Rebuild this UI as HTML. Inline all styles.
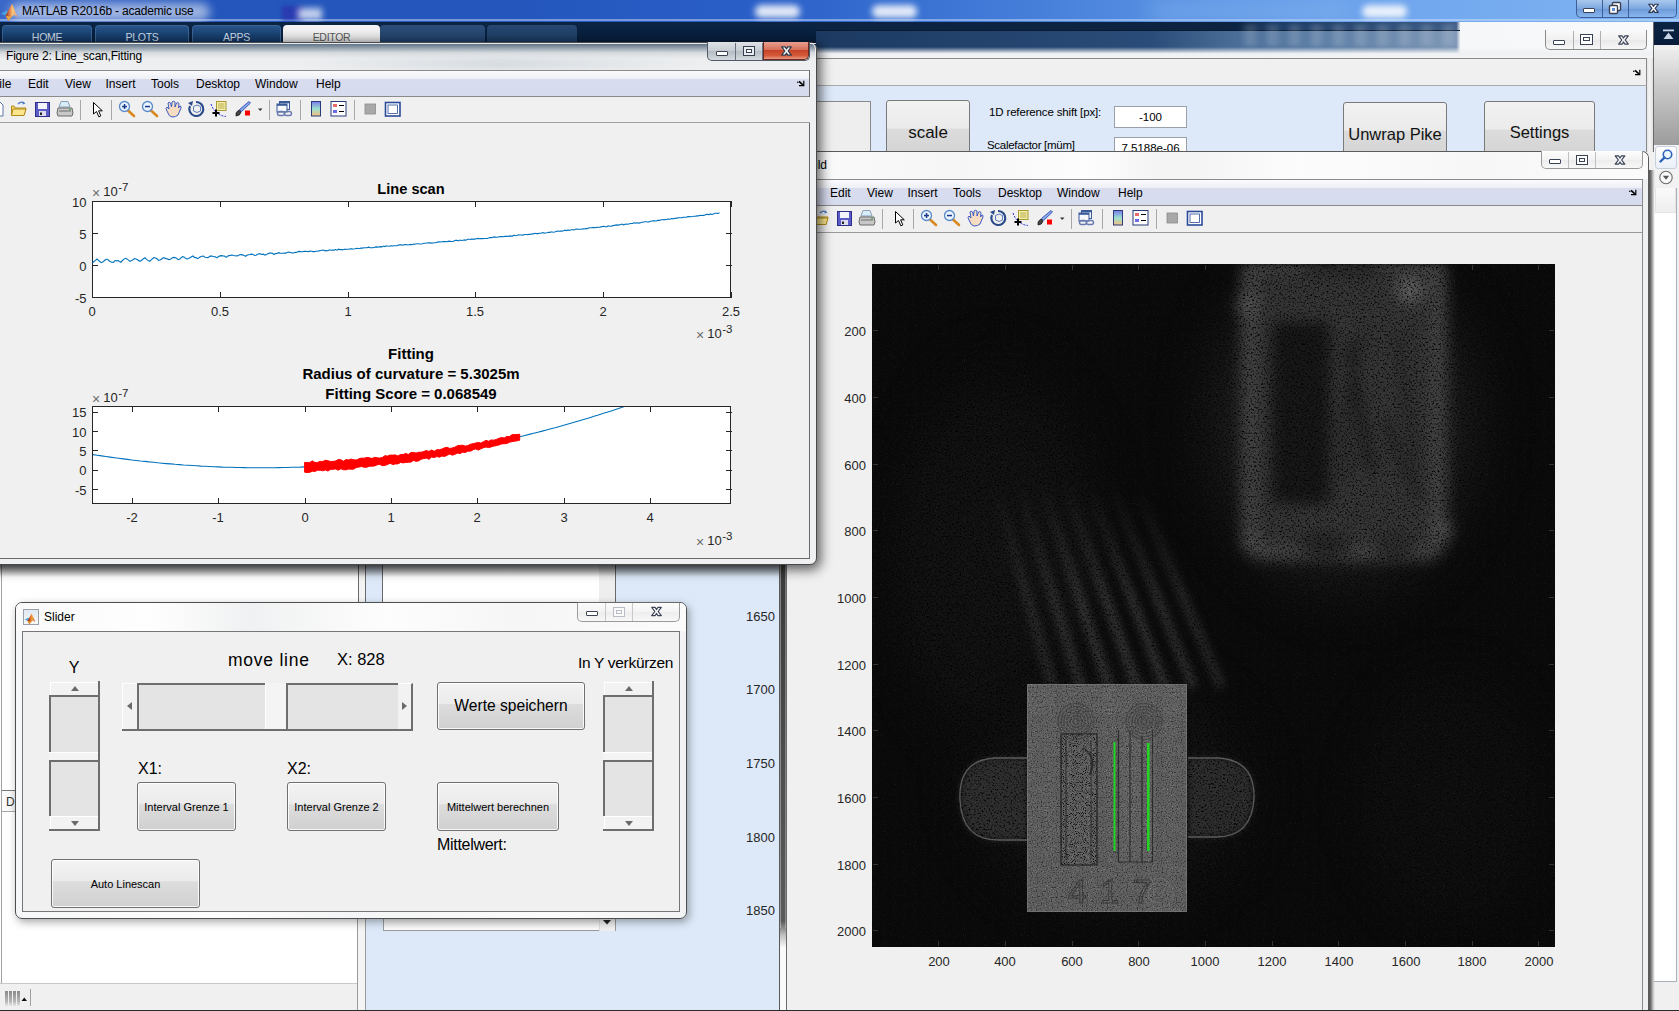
<!DOCTYPE html>
<html><head><meta charset="utf-8">
<style>
*{box-sizing:border-box}
html,body{margin:0;padding:0}
body{width:1679px;height:1011px;overflow:hidden;position:relative;background:#f0f0f0;font-family:"Liberation Sans",sans-serif;color:#000}
.a{position:absolute}
.t{position:absolute;white-space:nowrap;line-height:1}
svg{position:absolute;overflow:visible}
.btn{position:absolute;border:1px solid #707070;border-radius:3px;background:linear-gradient(#f3f3f3 0%,#ebebeb 45%,#dddddd 46%,#d0d0d0 100%);box-shadow:inset 0 0 0 1px rgba(255,255,255,.85)}
.btn span{position:absolute;left:0;right:0;top:50%;transform:translateY(-50%);text-align:center;line-height:1;white-space:nowrap;color:#000}

</style></head>
<body>
<div class="a" style="left:0px;top:0px;width:1679px;height:23px;background:linear-gradient(90deg,#3a68c8 0%,#2456bc 12%,#2456bc 30%,#2a5fc8 45%,#3f78d6 58%,#5b94e4 72%,#72a8ee 85%,#7fb4f2 100%)"></div>
<div class="a" style="left:0px;top:19px;width:1679px;height:2px;background:rgba(220,230,250,.45)"></div>
<div class="a" style="left:755px;top:5px;width:45px;height:13px;border-radius:6px;background:#fff;filter:blur(3px);opacity:.85"></div>
<div class="a" style="left:872px;top:5px;width:45px;height:13px;border-radius:6px;background:#fff;filter:blur(3px);opacity:.85"></div>
<div class="a" style="left:1362px;top:5px;width:45px;height:13px;border-radius:6px;background:#fff;filter:blur(3px);opacity:.85"></div>
<div class="a" style="left:282px;top:6px;width:22px;height:14px;background:#2a3ab0;filter:blur(2px)"></div>
<div class="a" style="left:298px;top:8px;width:24px;height:12px;background:#e8eefa;filter:blur(3px);opacity:.8"></div>
<div class="a" style="left:1150px;top:2px;width:200px;height:18px;background:#8ab8f0;filter:blur(10px);opacity:.5"></div>
<svg style="left:0px;top:0px" width="22" height="22" viewBox="0 0 20 20">
<defs><linearGradient id="mlg0" x1="0" y1="0" x2="1" y2="0"><stop offset="0" stop-color="#8a1a10"/><stop offset=".45" stop-color="#e87a30"/><stop offset=".6" stop-color="#f0b040"/><stop offset="1" stop-color="#d04020"/></linearGradient></defs>
<path d="M1 12.5 L5.8 9.5 L7.2 11 L5 14 Z" fill="#3fa0e0"/>
<path d="M5 14 L11 3.5 L16 15.5 L12.5 13.5 L7.5 19 Z" fill="url(#mlg0)"/>
<path d="M5 14 L7.5 19 L10 15.5 Z" fill="#f0b030" opacity=".8"/>
</svg><div class="a" style="left:10px;top:3px;width:200px;height:18px;border-radius:9px;background:rgba(255,255,255,.55);filter:blur(5px)"></div>
<div class="t" style="left:22px;top:5px;font-size:12px;color:#000;letter-spacing:-.2px">MATLAB R2016b - academic use</div>
<div class="a" style="left:1576px;top:0px;width:101px;height:18px;border:1px solid #3a5f9a;border-top:none;border-radius:0 0 5px 5px;background:linear-gradient(#a9c8ee,#7fa8e0 50%,#6d98d8 51%,#88b6ee)"></div>
<div class="a" style="left:1602px;top:0px;width:1px;height:17px;background:#3a5f9a"></div>
<div class="a" style="left:1628px;top:0px;width:1px;height:17px;background:#3a5f9a"></div>
<div class="a" style="left:1583px;top:8px;width:12px;height:5px;border:1.4px solid #3a4256;border-radius:1px;background:#fff"></div>
<svg style="left:1608px;top:1px" width="14" height="14" viewBox="0 0 14 14"><rect x="4.5" y="1.5" width="8" height="8" rx="1" fill="#fff" stroke="#3a4256" stroke-width="1.4"/><rect x="1.5" y="4.5" width="8" height="8" rx="1" fill="#fff" stroke="#3a4256" stroke-width="1.4"/><rect x="4" y="7" width="3" height="3" fill="#5a8ad8"/></svg><svg style="left:0;top:0;width:1px;height:1px"><polygon points="1648.70,4.25 1652.19,4.25 1653.50,6.34 1654.81,4.25 1658.30,4.25 1655.16,8.30 1658.30,12.35 1654.81,12.35 1653.50,10.26 1652.19,12.35 1648.70,12.35 1651.84,8.30" fill="#ffffff" stroke="#2c3a56" stroke-width="1.2" stroke-linejoin="round"/></svg><div class="a" style="left:0px;top:22px;width:1679px;height:23px;background:linear-gradient(#0c2444,#08203e 60%,#071d3a)"></div>
<div class="a" style="left:2px;top:25px;width:90px;height:18px;border-radius:4px 4px 0 0;background:linear-gradient(#27548a,#173f6e 60%,#113563);border:1px solid #3a6494;border-bottom:none"></div>
<div class="t" style="left:2px;top:32px;width:90px;text-align:center;font-size:10.5px;letter-spacing:-.3px;color:#d0dae6">HOME</div>
<div class="a" style="left:95px;top:25px;width:94px;height:18px;border-radius:4px 4px 0 0;background:linear-gradient(#27548a,#173f6e 60%,#113563);border:1px solid #3a6494;border-bottom:none"></div>
<div class="t" style="left:95px;top:32px;width:94px;text-align:center;font-size:10.5px;letter-spacing:-.3px;color:#d0dae6">PLOTS</div>
<div class="a" style="left:192px;top:25px;width:89px;height:18px;border-radius:4px 4px 0 0;background:linear-gradient(#27548a,#173f6e 60%,#113563);border:1px solid #3a6494;border-bottom:none"></div>
<div class="t" style="left:192px;top:32px;width:89px;text-align:center;font-size:10.5px;letter-spacing:-.3px;color:#d0dae6">APPS</div>
<div class="a" style="left:283px;top:25px;width:97px;height:18px;border-radius:4px 4px 0 0;background:linear-gradient(#f4f4f4,#e4e4e4);"></div>
<div class="t" style="left:283px;top:32px;width:97px;text-align:center;font-size:10.5px;letter-spacing:-.3px;color:#5a5a5a">EDITOR</div>
<div class="a" style="left:380px;top:25px;width:105px;height:18px;border-radius:4px 4px 0 0;background:linear-gradient(#3a6090,#2a4f7c);opacity:.7;filter:blur(.6px)"></div>
<div class="a" style="left:487px;top:25px;width:90px;height:18px;border-radius:4px 4px 0 0;background:linear-gradient(#3a6090,#2a4f7c);opacity:.6;filter:blur(.6px)"></div>
<div class="a" style="left:1653px;top:50px;width:26px;height:95px;background:linear-gradient(#ececec,#c8c8c8 40%,#9c9c9c)"></div>
<svg style="left:1662px;top:29px" width="14" height="12" viewBox="0 0 14 12"><rect x="1" y="0.5" width="11" height="1.8" fill="#c8d4e4"/><path d="M6.5 3.5 L11.5 10 L1.5 10 Z" fill="#c8d4e4"/></svg><div class="a" style="left:1653px;top:145px;width:26px;height:25px;background:#f2f2f2"></div>
<div class="a" style="left:1655px;top:146px;width:22px;height:23px;border:1px solid #c6cfdc;border-radius:3px;background:linear-gradient(#fdfdfe,#eaf0f8)"></div>
<svg style="left:1658px;top:148px" width="18" height="18" viewBox="0 0 18 18"><circle cx="9.5" cy="6.5" r="4.2" fill="#eef6ff" stroke="#2d62b8" stroke-width="1.6"/><path d="M6.5 9.5 L2.5 13.5" stroke="#2d62b8" stroke-width="2.4" stroke-linecap="round"/></svg><div class="a" style="left:1653px;top:170px;width:26px;height:18px;background:#f2f2f2"></div>
<svg style="left:1657px;top:169px" width="18" height="18" viewBox="0 0 18 18"><circle cx="9" cy="8.5" r="6.2" fill="#fafafa" stroke="#6a6a6a" stroke-width="1.1"/><path d="M5.8 6.8 L12.2 6.8 L9 10.8 Z" fill="#555"/></svg><div class="a" style="left:1653px;top:188px;width:26px;height:823px;background:#f0f0f0"></div>
<div class="a" style="left:1654px;top:188px;width:23px;height:794px;background:#fff;border-right:1px solid #a8b0bc;border-bottom:1px solid #a8b0bc"></div>
<div class="a" style="left:1655px;top:188px;width:21px;height:25px;background:linear-gradient(#fafafa,#eeeeee);border:1px solid #e4e4e4;border-top:none"></div>
<div class="a" style="left:816px;top:31px;width:837px;height:27px;background:linear-gradient(90deg,#1c3a62 0%,#2a4c78 40%,#4a6d98 50%,#5a7ca4 60%,#7a94b4 76.5%,#f6f7f8 77%,#f8f9fa 100%)"></div>
<div class="a" style="left:816px;top:47px;width:837px;height:12px;background:linear-gradient(rgba(200,210,222,.0),#eef0f3 55%,#f6f6f6)"></div>
<div class="a" style="left:816px;top:22px;width:837px;height:9px;background:linear-gradient(90deg,#0c2442 0%,#0c2442 50%,#1a3a64 55%,#3a5a84 76.5%,#f6f7f8 77%,#f8f9fa 100%)"></div>
<div class="a" style="left:816px;top:30px;width:644px;height:1px;background:#0a1a30"></div>
<div class="a" style="left:1240px;top:24px;width:220px;height:22px;background:repeating-linear-gradient(90deg,rgba(255,255,255,0) 0px,rgba(255,255,255,.18) 10px,rgba(255,255,255,0) 22px);filter:blur(2px)"></div>
<div class="a" style="left:1653px;top:22px;width:1px;height:130px;background:#6a6a6a"></div>
<div class="a" style="left:1646px;top:58px;width:7px;height:94px;background:linear-gradient(90deg,#dcdcdc,#f4f4f4 50%,#e0e0e0)"></div>
<div class="a" style="left:1545px;top:30px;width:102px;height:20px;border:1px solid #8a8a8a;border-top:none;border-radius:0 0 5px 5px;background:linear-gradient(#fafafa,#f0f0f0 50%,#e8e8e8 51%,#f6f6f6)"></div>
<div class="a" style="left:1573px;top:31px;width:1px;height:18px;background:#b0b0b0"></div>
<div class="a" style="left:1600px;top:31px;width:1px;height:18px;background:#b0b0b0"></div>
<div class="a" style="left:1553px;top:40px;width:12px;height:5px;border:1.5px solid #3a4256;border-radius:1px;background:#fff"></div>
<div class="a" style="left:1580px;top:34px;width:13px;height:11px;border:1.5px solid #3a4256;background:#fff"></div>
<div class="a" style="left:1583px;top:37px;width:7px;height:4px;border:1.5px solid #3a4256"></div>
<svg style="left:0;top:0;width:1px;height:1px"><polygon points="1618.70,35.95 1622.19,35.95 1623.50,38.04 1624.81,35.95 1628.30,35.95 1625.16,40.00 1628.30,44.05 1624.81,44.05 1623.50,41.96 1622.19,44.05 1618.70,44.05 1621.84,40.00" fill="#f6f6f6" stroke="#3a4256" stroke-width="1.2" stroke-linejoin="round"/></svg><div class="a" style="left:816px;top:58px;width:831px;height:1px;background:#8a8a8a"></div>
<div class="a" style="left:816px;top:59px;width:831px;height:26px;background:#f0f0f0"></div>
<div class="a" style="left:1646px;top:58px;width:1px;height:94px;background:#8a8a8a"></div>
<svg style="left:1633px;top:69px" width="8" height="7" viewBox="0 0 8 7"><circle cx="0.8" cy="2.2" r=".8" fill="#000"/><path d="M2 1.3 L6 5" stroke="#000" stroke-width="1.7"/><path d="M6.2 0.8 L7.4 0.8 L7.4 6.2 L2 6.2 L2 5 L6.2 5 Z" fill="#000"/></svg><div class="a" style="left:816px;top:85px;width:831px;height:1px;background:#a8a8a8"></div>
<div class="a" style="left:816px;top:86px;width:830px;height:66px;background:#dde9f9"></div>
<div class="a" style="left:800px;top:101px;width:71px;height:60px;border:1px solid #8a8a8a;background:#eeeeee"></div>
<div class="a" style="left:886px;top:100px;width:84px;height:60px;border:1px solid #7a7a7a;border-radius:3px;background:linear-gradient(#f2f2f2,#ebebeb 47%,#dcdcdc 48%,#d2d2d2)"></div>
<div class="t" style="left:886px;top:124px;width:84px;text-align:center;font-size:17px;color:#111">scale</div>
<div class="t" style="left:989px;top:107px;font-size:11.5px;color:#000;letter-spacing:-.15px">1D reference shift [px]:</div>
<div class="a" style="left:1114px;top:106px;width:73px;height:22px;border:1px solid #9aa0a8;background:#fff"></div>
<div class="t" style="left:1114px;top:112px;width:73px;text-align:center;font-size:11.5px;color:#000">-100</div>
<div class="t" style="left:987px;top:140px;font-size:11.5px;color:#000;letter-spacing:-.3px">Scalefactor [müm]</div>
<div class="a" style="left:1114px;top:137px;width:73px;height:20px;border:1px solid #9aa0a8;background:#fff"></div>
<div class="t" style="left:1114px;top:143px;width:73px;text-align:center;font-size:11.5px;color:#000">7.5188e-06</div>
<div class="a" style="left:1343px;top:102px;width:104px;height:60px;border:1px solid #7a7a7a;border-radius:3px;background:linear-gradient(#f2f2f2,#ebebeb 47%,#dcdcdc 48%,#d2d2d2)"></div>
<div class="t" style="left:1343px;top:126px;width:104px;text-align:center;font-size:16.5px;color:#111">Unwrap Pike</div>
<div class="a" style="left:1484px;top:101px;width:111px;height:60px;border:1px solid #7a7a7a;border-radius:3px;background:linear-gradient(#f2f2f2,#ebebeb 47%,#dcdcdc 48%,#d2d2d2)"></div>
<div class="t" style="left:1484px;top:124px;width:111px;text-align:center;font-size:16.5px;color:#111">Settings</div>
<div class="a" style="left:779px;top:151px;width:870px;height:860px;border:1px solid #5a5a5a;border-bottom:none;border-radius:7px 7px 0 0;background:linear-gradient(90deg,#e6e8ea,#f6f7f8 30%,#f4f5f6 70%,#eef0f2)"></div>
<div class="a" style="left:1649px;top:170px;width:6px;height:841px;background:linear-gradient(90deg,#505050,#7a7a7a 35%,rgba(160,160,160,.5) 70%,rgba(255,255,255,0))"></div>
<div class="a" style="left:780px;top:152px;width:868px;height:27px;border-radius:6px 6px 0 0;background:linear-gradient(90deg,#fbfbfb,#f6f6f6 20%,#fdfdfd 35%,#f3f3f3 45%,#fcfcfc 60%,#f7f7f7 80%,#fbfbfb)"></div>
<div class="t" style="left:807px;top:159px;font-size:12px;color:#000">Bild</div>
<div class="a" style="left:1541px;top:151px;width:102px;height:18px;border:1px solid #9a9a9a;border-top:none;border-radius:0 0 5px 5px;background:linear-gradient(#fdfdfd,#f3f3f3 50%,#ececec 51%,#f8f8f8)"></div>
<div class="a" style="left:1568px;top:152px;width:1px;height:16px;background:#c0c0c0"></div>
<div class="a" style="left:1595px;top:152px;width:1px;height:16px;background:#c0c0c0"></div>
<div class="a" style="left:1549px;top:159px;width:12px;height:5px;border:1.5px solid #3a4256;border-radius:1px;background:#fff"></div>
<div class="a" style="left:1576px;top:155px;width:12px;height:10px;border:1.5px solid #3a4256;background:#fff"></div>
<div class="a" style="left:1579px;top:158px;width:6px;height:4px;border:1.5px solid #3a4256"></div>
<svg style="left:0;top:0;width:1px;height:1px"><polygon points="1615.20,155.95 1618.69,155.95 1620.00,158.04 1621.31,155.95 1624.80,155.95 1621.66,160.00 1624.80,164.05 1621.31,164.05 1620.00,161.96 1618.69,164.05 1615.20,164.05 1618.34,160.00" fill="#f6f6f6" stroke="#3a4256" stroke-width="1.2" stroke-linejoin="round"/></svg><div class="a" style="left:786px;top:179px;width:857px;height:832px;background:#f0f0f0;border-left:1px solid #6a6a6a;border-right:1px solid #8a8a8a"></div>
<div class="a" style="left:787px;top:179px;width:855px;height:1px;background:#8a8a8a"></div>
<div class="a" style="left:787px;top:180px;width:855px;height:25px;background:linear-gradient(#fbfbfd 0%,#eef0f6 30%,#d8dcee 32%,#d6dbee 100%)"></div>
<div class="a" style="left:787px;top:205px;width:855px;height:1px;background:#8a8a8a"></div>
<div class="t" style="left:794px;top:187px;font-size:12px;color:#000">File</div>
<div class="t" style="left:830px;top:187px;font-size:12px;color:#000">Edit</div>
<div class="t" style="left:867px;top:187px;font-size:12px;color:#000">View</div>
<div class="t" style="left:907.5px;top:187px;font-size:12px;color:#000">Insert</div>
<div class="t" style="left:953px;top:187px;font-size:12px;color:#000">Tools</div>
<div class="t" style="left:998px;top:187px;font-size:12px;color:#000">Desktop</div>
<div class="t" style="left:1057px;top:187px;font-size:12px;color:#000">Window</div>
<div class="t" style="left:1118px;top:187px;font-size:12px;color:#000">Help</div>
<svg style="left:1629px;top:189px" width="8" height="7" viewBox="0 0 8 7"><circle cx="0.8" cy="2.2" r=".8" fill="#000"/><path d="M2 1.3 L6 5" stroke="#000" stroke-width="1.7"/><path d="M6.2 0.8 L7.4 0.8 L7.4 6.2 L2 6.2 L2 5 L6.2 5 Z" fill="#000"/></svg><div class="a" style="left:787px;top:206px;width:855px;height:26px;background:#f0f0f0"></div>
<div class="a" style="left:787px;top:206px;width:855px;height:26px;overflow:hidden"><svg style="left:5px;top:-1px" width="420" height="28" viewBox="-10 96 420 28"><path d="M-8 102 L0 102 L3 105 L3 116 L-8 116 Z" fill="#fff" stroke="#5a78a8" stroke-width="1"/><path d="M11.5 106 L11.5 115.5 L24 115.5 L26 108 L15 108 L14 106 Z" fill="#f6d96a" stroke="#b08a1a" stroke-width="1"/><path d="M13 109 L26 109 L24 115.5 L11.5 115.5 Z" fill="#fbe68e" stroke="#b08a1a" stroke-width="1"/><path d="M18 104 Q21 101 24 103" fill="none" stroke="#4a7ac8" stroke-width="1.3"/><path d="M23 101.5 L25.5 103.5 L22.5 104.5 Z" fill="#4a7ac8"/><rect x="35.5" y="102.5" width="14" height="14" fill="#5c5cc8" stroke="#2e2e8a" stroke-width="1"/><rect x="38" y="103" width="9" height="6" fill="#f4f4fc"/><rect x="39" y="111" width="7" height="5" fill="#dcdcec"/><rect x="40" y="112.5" width="2" height="2.5" fill="#222"/><path d="M61 101.5 L68 101.5 L70 107 L59 107 Z" fill="#d8ecfa" stroke="#8aa0b4" stroke-width="1"/><path d="M58 108 L72 108 L73 113 L72 116 L58 116 L57 113 Z" fill="#c8c8c8" stroke="#6a6a6a" stroke-width="1"/><rect x="59" y="110" width="12" height="2" fill="#9a9a9a"/><circle cx="70" cy="109.6" r=".8" fill="#3a3"/><rect x="80.0" y="100" width="1" height="20" fill="#a8a8a8"/><rect x="111.0" y="100" width="1" height="20" fill="#a8a8a8"/><rect x="269.0" y="100" width="1" height="20" fill="#a8a8a8"/><rect x="300.0" y="100" width="1" height="20" fill="#a8a8a8"/><rect x="354.0" y="100" width="1" height="20" fill="#a8a8a8"/><path d="M93.5 102.5 L93.5 114 L96.5 111.5 L98.8 116.8 L100.8 115.9 L98.6 110.8 L102.3 110.8 Z" fill="#fff" stroke="#000" stroke-width="1"/><path d="M127.5 110 L134 116" stroke="#d88a20" stroke-width="2.6" stroke-linecap="round"/><circle cx="124.5" cy="106.5" r="5" fill="#eaf4ff" stroke="#5a8ac8" stroke-width="1.3"/><rect x="122" y="105.8" width="5" height="1.5" fill="#1a3a8a"/><rect x="123.8" y="104" width="1.5" height="5" fill="#1a3a8a"/><path d="M150.5 110 L157 116" stroke="#d88a20" stroke-width="2.6" stroke-linecap="round"/><circle cx="147.5" cy="106.5" r="5" fill="#eaf4ff" stroke="#5a8ac8" stroke-width="1.3"/><rect x="145" y="105.8" width="5" height="1.5" fill="#1a3a8a"/><path d="M167 111 Q165 108 167 107 L169 109 L168 103 Q169 101.5 170.5 103 L171.5 107 L172 102 Q173.5 100.5 175 102 L175 107 L176.5 103 Q178 102 179 103.5 L178.5 108 L180 106 Q181.5 106 181 108 L178 115 Q176 117 172 117 Q169 117 167 111 Z" fill="#f6dcc0" stroke="#3a5ac8" stroke-width="1"/><path d="M190 106 A7 7 0 1 0 196 102" fill="none" stroke="#2a4a8a" stroke-width="2.2"/><path d="M188 103 L193 101 L192 106 Z" fill="#2a4a8a"/><path d="M193.5 106.5 L197 105 L200.5 106.5 L200.5 111 L197 112.5 L193.5 111 Z" fill="none" stroke="#5a7ab8" stroke-width="1"/><rect x="216.5" y="101.5" width="9.5" height="9" fill="#f6f0b0" stroke="#a89a30" stroke-width="1"/><path d="M218 104 L224.5 104 M218 106 L224.5 106 M218 108 L224.5 108" stroke="#a89a30" stroke-width=".8"/><path d="M211 104 Q213 110 217 113 Q221 116 226 116.5" fill="none" stroke="#2a2ae0" stroke-width="1" stroke-dasharray="2 1.2"/><path d="M212.5 113 L219.5 113 M216 109.5 L216 116.5" stroke="#000" stroke-width="2"/><path d="M236 116 Q235 112 239 110 L241 112 Q240 116 236 116 Z" fill="#444" stroke="#222" stroke-width=".8"/><path d="M239.5 109.5 L249 101.5 L250.5 103 L241.5 111.5 Z" fill="#8aa8e8" stroke="#3a5ab8" stroke-width="1"/><rect x="245" y="110.5" width="5" height="5" fill="#ff0000"/><path d="M258 108.5 L262.5 108.5 L260.2 111 Z" fill="#333"/><rect x="279.5" y="101.5" width="10" height="8" fill="#f6f8fc" stroke="#3a5a9a" stroke-width="1"/><rect x="279.5" y="101.5" width="10" height="1.8" fill="#3a5a9a"/><rect x="277" y="104" width="10" height="8" fill="#f6f8fc" stroke="#3a5a9a" stroke-width="1"/><rect x="277" y="104" width="10" height="1.8" fill="#3a5a9a"/><rect x="277.5" y="111.5" width="7" height="4" rx="2" fill="none" stroke="#6a7ab0" stroke-width="1.4"/><rect x="284.5" y="111.5" width="7" height="4" rx="2" fill="none" stroke="#6a7ab0" stroke-width="1.4"/><defs><linearGradient id="cbg" x1="0" y1="0" x2="0" y2="1"><stop offset="0" stop-color="#7a7ae8"/><stop offset=".5" stop-color="#9ae0d0"/><stop offset="1" stop-color="#f6c080"/></linearGradient></defs><rect x="311.5" y="101.5" width="9" height="14.5" fill="url(#cbg)" stroke="#2a3a7a" stroke-width="1"/><rect x="331" y="101.5" width="15" height="14.5" fill="#fff" stroke="#2a3a7a" stroke-width="1"/><rect x="333" y="104" width="4" height="3" fill="#e86a6a"/><rect x="333" y="110" width="4" height="3" fill="#6a6ae8"/><path d="M339 105.5 L344 105.5 M339 111.5 L344 111.5" stroke="#000" stroke-width="1"/><rect x="365" y="104" width="10.5" height="10" fill="#a8a8a8" stroke="#8a8a8a" stroke-width=".8"/><rect x="385.5" y="102.5" width="14.5" height="13.5" fill="#fff" stroke="#2a4a9a" stroke-width="1.6"/><rect x="388" y="105" width="9.5" height="8.5" fill="#fff" stroke="#2a4a9a" stroke-width=".8"/></svg></div><div class="a" style="left:786px;top:232px;width:856px;height:1px;background:#9a9a9a"></div>
<div class="t" style="left:820px;top:325px;width:46px;text-align:right;font-size:13px;color:#262626">200</div>
<div class="t" style="left:909px;top:955px;width:60px;text-align:center;font-size:13px;color:#262626">200</div>
<div class="t" style="left:820px;top:392px;width:46px;text-align:right;font-size:13px;color:#262626">400</div>
<div class="t" style="left:975px;top:955px;width:60px;text-align:center;font-size:13px;color:#262626">400</div>
<div class="t" style="left:820px;top:459px;width:46px;text-align:right;font-size:13px;color:#262626">600</div>
<div class="t" style="left:1042px;top:955px;width:60px;text-align:center;font-size:13px;color:#262626">600</div>
<div class="t" style="left:820px;top:525px;width:46px;text-align:right;font-size:13px;color:#262626">800</div>
<div class="t" style="left:1109px;top:955px;width:60px;text-align:center;font-size:13px;color:#262626">800</div>
<div class="t" style="left:820px;top:592px;width:46px;text-align:right;font-size:13px;color:#262626">1000</div>
<div class="t" style="left:1175px;top:955px;width:60px;text-align:center;font-size:13px;color:#262626">1000</div>
<div class="t" style="left:820px;top:659px;width:46px;text-align:right;font-size:13px;color:#262626">1200</div>
<div class="t" style="left:1242px;top:955px;width:60px;text-align:center;font-size:13px;color:#262626">1200</div>
<div class="t" style="left:820px;top:725px;width:46px;text-align:right;font-size:13px;color:#262626">1400</div>
<div class="t" style="left:1309px;top:955px;width:60px;text-align:center;font-size:13px;color:#262626">1400</div>
<div class="t" style="left:820px;top:792px;width:46px;text-align:right;font-size:13px;color:#262626">1600</div>
<div class="t" style="left:1376px;top:955px;width:60px;text-align:center;font-size:13px;color:#262626">1600</div>
<div class="t" style="left:820px;top:859px;width:46px;text-align:right;font-size:13px;color:#262626">1800</div>
<div class="t" style="left:1442px;top:955px;width:60px;text-align:center;font-size:13px;color:#262626">1800</div>
<div class="t" style="left:820px;top:925px;width:46px;text-align:right;font-size:13px;color:#262626">2000</div>
<div class="t" style="left:1509px;top:955px;width:60px;text-align:center;font-size:13px;color:#262626">2000</div>
<svg style="left:872px;top:264px" width="683" height="683" viewBox="872 264 683 683"><defs>
<filter id="b3" filterUnits="userSpaceOnUse" x="872" y="264" width="683" height="683" color-interpolation-filters="sRGB"><feGaussianBlur stdDeviation="2.6"/></filter>
<filter id="b6" filterUnits="userSpaceOnUse" x="872" y="264" width="683" height="683" color-interpolation-filters="sRGB"><feGaussianBlur stdDeviation="6"/></filter>
<filter id="b30" filterUnits="userSpaceOnUse" x="872" y="264" width="683" height="683" color-interpolation-filters="sRGB"><feGaussianBlur stdDeviation="30"/></filter>
<filter id="texmul" filterUnits="userSpaceOnUse" x="872" y="264" width="683" height="683" color-interpolation-filters="sRGB">
 <feGaussianBlur in="SourceGraphic" stdDeviation="3" result="sg"/>
 <feTurbulence type="fractalNoise" baseFrequency="0.55" numOctaves="2" seed="7" result="n"/>
 <feColorMatrix in="n" type="matrix" values="1 0 0 0 0  1 0 0 0 0  1 0 0 0 0  0 0 0 0 1" result="ng"/>
 <feComponentTransfer in="ng" result="nn"><feFuncR type="linear" slope="3.2" intercept="-0.6"/><feFuncG type="linear" slope="3.2" intercept="-0.6"/><feFuncB type="linear" slope="3.2" intercept="-0.6"/></feComponentTransfer>
 <feComposite in="sg" in2="nn" operator="arithmetic" k1="1" k2="0" k3="0" k4="0"/>
</filter>
<filter id="texchip" filterUnits="userSpaceOnUse" x="872" y="264" width="683" height="683" color-interpolation-filters="sRGB">
 <feTurbulence type="fractalNoise" baseFrequency="0.8" numOctaves="1" seed="12" result="n"/>
 <feColorMatrix in="n" type="matrix" values="1 0 0 0 0  1 0 0 0 0  1 0 0 0 0  0 0 0 0 1" result="ng"/>
 <feComponentTransfer in="ng" result="nn"><feFuncR type="linear" slope="2.0" intercept="0.0"/><feFuncG type="linear" slope="2.0" intercept="0.0"/><feFuncB type="linear" slope="2.0" intercept="0.0"/></feComponentTransfer>
 <feComposite in="SourceGraphic" in2="nn" operator="arithmetic" k1="1" k2="0" k3="0" k4="0"/>
</filter>
<filter id="texhi" filterUnits="userSpaceOnUse" x="872" y="264" width="683" height="683" color-interpolation-filters="sRGB">
 <feTurbulence type="fractalNoise" baseFrequency="1.1" numOctaves="1" seed="21" result="n"/>
 <feColorMatrix in="n" type="matrix" values="1 0 0 0 0  1 0 0 0 0  1 0 0 0 0  0 0 0 0 1" result="ng"/>
 <feComponentTransfer in="ng" result="nn"><feFuncR type="linear" slope="4" intercept="-1"/><feFuncG type="linear" slope="4" intercept="-1"/><feFuncB type="linear" slope="4" intercept="-1"/></feComponentTransfer>
 <feComposite in="SourceGraphic" in2="nn" operator="arithmetic" k1="1" k2="0" k3="0" k4="0"/>
</filter>
<filter id="lightspk" filterUnits="userSpaceOnUse" x="872" y="264" width="683" height="683" color-interpolation-filters="sRGB">
 <feTurbulence type="fractalNoise" baseFrequency="0.95" numOctaves="1" seed="33"/>
 <feColorMatrix type="matrix" values="0 0 0 0 1  0 0 0 0 1  0 0 0 0 1  5 0 0 0 -3.0"/>
</filter>
<filter id="bgnoise" filterUnits="userSpaceOnUse" x="872" y="264" width="683" height="683" color-interpolation-filters="sRGB">
 <feTurbulence type="fractalNoise" baseFrequency="0.9" numOctaves="1" seed="4"/>
 <feColorMatrix type="matrix" values="0 0 0 0 1  0 0 0 0 1  0 0 0 0 1  4 0 0 0 -2.3"/>
</filter>
<clipPath id="imgclip"><rect x="872" y="264" width="683" height="683"/></clipPath>
<clipPath id="chipclip"><rect x="1027" y="684" width="160" height="228"/></clipPath>
</defs><g clip-path="url(#imgclip)"><rect x="872" y="264" width="683" height="683" fill="#090909"/><g filter="url(#texmul)"><defs><radialGradient id="rgA"><stop offset="0" stop-color="#131313"/><stop offset=".6" stop-color="#101010"/><stop offset="1" stop-color="#0b0b0b" stop-opacity="0"/></radialGradient><radialGradient id="rgB"><stop offset="0" stop-color="#242424"/><stop offset=".6" stop-color="#1a1a1a"/><stop offset="1" stop-color="#0b0b0b" stop-opacity="0"/></radialGradient></defs><ellipse cx="1000" cy="560" rx="150" ry="250" fill="url(#rgA)"/><ellipse cx="1110" cy="790" rx="190" ry="170" fill="url(#rgA)"/><ellipse cx="1343" cy="420" rx="190" ry="230" fill="url(#rgB)"/><ellipse cx="1450" cy="800" rx="130" ry="170" fill="url(#rgA)" opacity=".6"/><g filter="url(#b6)"><rect x="1240" y="250" width="208" height="312" rx="24" fill="#343434"/><rect x="1250" y="262" width="188" height="290" rx="18" fill="none" stroke="#444" stroke-width="14"/><ellipse cx="1343" cy="268" rx="40" ry="8" fill="#262626"/><rect x="1272" y="322" width="58" height="182" rx="8" fill="#161616"/><path d="M1350 345 Q1358 420 1372 470" stroke="#1a1a1a" stroke-width="8" fill="none"/><path d="M1365 330 Q1340 400 1345 480" stroke="#202020" stroke-width="5" fill="none"/><path d="M1385 420 Q1405 470 1420 500" stroke="#1c1c1c" stroke-width="6" fill="none"/><path d="M1398 330 Q1404 400 1418 470" stroke="#242424" stroke-width="6" fill="none"/><ellipse cx="1325" cy="545" rx="26" ry="12" fill="#252525"/><ellipse cx="1395" cy="545" rx="22" ry="12" fill="#2a2a2a"/><circle cx="1410" cy="290" r="14" fill="#5a5a5a"/><circle cx="1248" cy="305" r="12" fill="#505050"/><circle cx="1443" cy="530" r="10" fill="#505050"/><circle cx="1250" cy="540" r="10" fill="#4a4a4a"/></g><g filter="url(#b3)"><defs><linearGradient id="sg" gradientUnits="userSpaceOnUse" x1="0" y1="480" x2="0" y2="600"><stop offset="0" stop-color="#343434" stop-opacity="0"/><stop offset="1" stop-color="#343434" stop-opacity="1"/></linearGradient></defs><path d="M994 480 L1052 684" stroke="url(#sg)" opacity="0.7" stroke-width="10" stroke-linecap="round"/><path d="M1018 482 L1080 684" stroke="url(#sg)" opacity="0.85" stroke-width="10" stroke-linecap="round"/><path d="M1042 484 L1108 684" stroke="url(#sg)" opacity="1" stroke-width="10" stroke-linecap="round"/><path d="M1066 486 L1136 684" stroke="url(#sg)" opacity="1" stroke-width="10" stroke-linecap="round"/><path d="M1090 488 L1164 684" stroke="url(#sg)" opacity="0.95" stroke-width="10" stroke-linecap="round"/><path d="M1114 490 L1192 684" stroke="url(#sg)" opacity="0.85" stroke-width="10" stroke-linecap="round"/><path d="M1138 492 L1220 684" stroke="url(#sg)" opacity="0.7" stroke-width="10" stroke-linecap="round"/></g><path d="M1027 758 L995 758 Q958 760 960 800 Q962 840 998 840 L1027 840 Z" fill="#2e2e2e"/><path d="M1188 758 L1218 758 Q1255 760 1254 798 Q1252 837 1216 837 L1188 837 Z" fill="#2c2c2c"/></g><path d="M1027 758 L995 758 Q958 760 960 800 Q962 840 998 840 L1027 840" fill="none" stroke="#6a6a6a" stroke-width="1.3" opacity=".8"/><path d="M1188 758 L1218 758 Q1255 760 1254 798 Q1252 837 1216 837 L1188 837" fill="none" stroke="#6a6a6a" stroke-width="1.3" opacity=".8"/><g filter="url(#texchip)" clip-path="url(#chipclip)"><rect x="1027" y="684" width="160" height="228" fill="#606060"/><rect x="1118" y="729" width="37" height="133" fill="#646464"/></g><rect x="1061" y="734" width="36" height="131" fill="#606060" filter="url(#texhi)"/><g clip-path="url(#chipclip)" fill="none"><rect x="1061" y="734" width="36" height="131" stroke="#202020" stroke-width="1.2"/><path d="M1066 740 L1066 860 M1091 740 L1091 860" stroke="#2a2a2a" stroke-width="1"/><path d="M1083 748 Q1097 756 1090 775" stroke="#2a2a2a" stroke-width="2"/><path d="M1118.5 730 L1118.5 862 L1152.5 862 L1152.5 730 M1130 730 L1130 862 M1142 736 L1142 862" stroke="#2a2a2a" stroke-width="1.2"/><circle cx="1076" cy="721.5" r="3" stroke="#383838" stroke-width="1.3" opacity=".6"/><circle cx="1076" cy="721.5" r="6" stroke="#383838" stroke-width="1.3" opacity=".6"/><circle cx="1076" cy="721.5" r="9" stroke="#383838" stroke-width="1.3" opacity=".6"/><circle cx="1076" cy="721.5" r="12" stroke="#383838" stroke-width="1.3" opacity=".6"/><circle cx="1076" cy="721.5" r="15" stroke="#383838" stroke-width="1.3" opacity=".6"/><circle cx="1076" cy="721.5" r="18" stroke="#383838" stroke-width="1.3" opacity=".6"/><circle cx="1144" cy="721.5" r="3" stroke="#383838" stroke-width="1.3" opacity=".6"/><circle cx="1144" cy="721.5" r="6" stroke="#383838" stroke-width="1.3" opacity=".6"/><circle cx="1144" cy="721.5" r="9" stroke="#383838" stroke-width="1.3" opacity=".6"/><circle cx="1144" cy="721.5" r="12" stroke="#383838" stroke-width="1.3" opacity=".6"/><circle cx="1144" cy="721.5" r="15" stroke="#383838" stroke-width="1.3" opacity=".6"/><circle cx="1144" cy="721.5" r="18" stroke="#383838" stroke-width="1.3" opacity=".6"/><circle cx="1040" cy="702" r="4" stroke="#7a7a7a" stroke-width="1" opacity=".35"/><circle cx="1040" cy="702" r="8" stroke="#7a7a7a" stroke-width="1" opacity=".35"/><circle cx="1040" cy="702" r="12" stroke="#7a7a7a" stroke-width="1" opacity=".35"/><circle cx="1110" cy="702" r="4" stroke="#7a7a7a" stroke-width="1" opacity=".35"/><circle cx="1110" cy="702" r="8" stroke="#7a7a7a" stroke-width="1" opacity=".35"/><circle cx="1110" cy="702" r="12" stroke="#7a7a7a" stroke-width="1" opacity=".35"/><circle cx="1175" cy="702" r="4" stroke="#7a7a7a" stroke-width="1" opacity=".35"/><circle cx="1175" cy="702" r="8" stroke="#7a7a7a" stroke-width="1" opacity=".35"/><circle cx="1175" cy="702" r="12" stroke="#7a7a7a" stroke-width="1" opacity=".35"/><circle cx="1158" cy="893" r="5" stroke="#7a7a7a" stroke-width="1" opacity=".5"/><circle cx="1158" cy="893" r="10" stroke="#7a7a7a" stroke-width="1" opacity=".5"/><circle cx="1158" cy="893" r="15" stroke="#7a7a7a" stroke-width="1" opacity=".5"/><text x="1068" y="903" font-family="Liberation Sans" font-size="34" fill="none" stroke="#303030" stroke-width="1" opacity=".85" letter-spacing="2">4 1 7</text><rect x="1027.5" y="684.5" width="159" height="227" stroke="#6e6e6e" stroke-width="1"/></g><g clip-path="url(#chipclip)"><rect x="1027" y="684" width="160" height="228" filter="url(#lightspk)" opacity=".22"/></g><rect x="872" y="264" width="683" height="683" filter="url(#bgnoise)" opacity=".06"/><rect x="1113.5" y="742" width="2" height="109" fill="#22d422"/><rect x="1147" y="743" width="2.6" height="108" fill="#22d422"/></g></svg><div class="a" style="left:873px;top:330px;width:5px;height:1px;background:#333"></div>
<div class="a" style="left:1549px;top:330px;width:5px;height:1px;background:#333"></div>
<div class="a" style="left:938px;top:265px;width:1px;height:5px;background:#333"></div>
<div class="a" style="left:938px;top:941px;width:1px;height:5px;background:#333"></div>
<div class="a" style="left:873px;top:397px;width:5px;height:1px;background:#333"></div>
<div class="a" style="left:1549px;top:397px;width:5px;height:1px;background:#333"></div>
<div class="a" style="left:1005px;top:265px;width:1px;height:5px;background:#333"></div>
<div class="a" style="left:1005px;top:941px;width:1px;height:5px;background:#333"></div>
<div class="a" style="left:873px;top:464px;width:5px;height:1px;background:#333"></div>
<div class="a" style="left:1549px;top:464px;width:5px;height:1px;background:#333"></div>
<div class="a" style="left:1072px;top:265px;width:1px;height:5px;background:#333"></div>
<div class="a" style="left:1072px;top:941px;width:1px;height:5px;background:#333"></div>
<div class="a" style="left:873px;top:530px;width:5px;height:1px;background:#333"></div>
<div class="a" style="left:1549px;top:530px;width:5px;height:1px;background:#333"></div>
<div class="a" style="left:1138px;top:265px;width:1px;height:5px;background:#333"></div>
<div class="a" style="left:1138px;top:941px;width:1px;height:5px;background:#333"></div>
<div class="a" style="left:873px;top:597px;width:5px;height:1px;background:#333"></div>
<div class="a" style="left:1549px;top:597px;width:5px;height:1px;background:#333"></div>
<div class="a" style="left:1205px;top:265px;width:1px;height:5px;background:#333"></div>
<div class="a" style="left:1205px;top:941px;width:1px;height:5px;background:#333"></div>
<div class="a" style="left:873px;top:664px;width:5px;height:1px;background:#333"></div>
<div class="a" style="left:1549px;top:664px;width:5px;height:1px;background:#333"></div>
<div class="a" style="left:1272px;top:265px;width:1px;height:5px;background:#333"></div>
<div class="a" style="left:1272px;top:941px;width:1px;height:5px;background:#333"></div>
<div class="a" style="left:873px;top:730px;width:5px;height:1px;background:#333"></div>
<div class="a" style="left:1549px;top:730px;width:5px;height:1px;background:#333"></div>
<div class="a" style="left:1338px;top:265px;width:1px;height:5px;background:#333"></div>
<div class="a" style="left:1338px;top:941px;width:1px;height:5px;background:#333"></div>
<div class="a" style="left:873px;top:797px;width:5px;height:1px;background:#333"></div>
<div class="a" style="left:1549px;top:797px;width:5px;height:1px;background:#333"></div>
<div class="a" style="left:1405px;top:265px;width:1px;height:5px;background:#333"></div>
<div class="a" style="left:1405px;top:941px;width:1px;height:5px;background:#333"></div>
<div class="a" style="left:873px;top:864px;width:5px;height:1px;background:#333"></div>
<div class="a" style="left:1549px;top:864px;width:5px;height:1px;background:#333"></div>
<div class="a" style="left:1472px;top:265px;width:1px;height:5px;background:#333"></div>
<div class="a" style="left:1472px;top:941px;width:1px;height:5px;background:#333"></div>
<div class="a" style="left:873px;top:930px;width:5px;height:1px;background:#333"></div>
<div class="a" style="left:1549px;top:930px;width:5px;height:1px;background:#333"></div>
<div class="a" style="left:1538px;top:265px;width:1px;height:5px;background:#333"></div>
<div class="a" style="left:1538px;top:941px;width:1px;height:5px;background:#333"></div>
<div class="a" style="left:0px;top:1010px;width:1679px;height:1px;background:#2a2a2a"></div>
<div class="a" style="left:0px;top:565px;width:779px;height:445px;background:#fff"></div>
<div class="a" style="left:1px;top:565px;width:1px;height:418px;background:#a0a0a0"></div>
<div class="a" style="left:358px;top:565px;width:1px;height:353px;background:#6a6a6a"></div>
<div class="a" style="left:359px;top:565px;width:6px;height:353px;background:#f4f4f4"></div>
<div class="a" style="left:365px;top:565px;width:1px;height:353px;background:#6a6a6a"></div>
<div class="a" style="left:366px;top:565px;width:16px;height:445px;background:#dde9f9"></div>
<div class="a" style="left:382px;top:565px;width:1px;height:353px;background:#6a6a6a"></div>
<div class="a" style="left:599px;top:565px;width:16px;height:353px;background:#eeeeee"></div>
<div class="a" style="left:615px;top:565px;width:1px;height:353px;background:#6a6a6a"></div>
<div class="a" style="left:616px;top:565px;width:163px;height:445px;background:#dde9f9"></div>
<div class="a" style="left:382px;top:918px;width:234px;height:92px;background:#dde9f9"></div>
<div class="a" style="left:383px;top:918px;width:233px;height:13px;background:linear-gradient(#e8e8e8,#fdfdfd);border:1px solid #9a9a9a;border-top:none"></div>
<div class="a" style="left:599px;top:918px;width:16px;height:13px;background:#f0f0f0;border-left:1px solid #dedede"></div>
<svg style="left:602px;top:920px" width="10" height="6" viewBox="0 0 10 6"><path d="M1 0 L9 0 L5 4.5 Z" fill="#222"/></svg><div class="a" style="left:0px;top:565px;width:779px;height:12px;background:linear-gradient(rgba(0,0,0,.45),rgba(0,0,0,0))"></div>
<div class="a" style="left:2px;top:790px;width:18px;height:22px;border-top:1px solid #7a7a7a;border-bottom:1px solid #a8a8a8;background:linear-gradient(90deg,#fdfdfd,#f0f0f0)"></div>
<div class="t" style="left:6px;top:796px;font-size:12px;color:#333">D</div>
<div class="a" style="left:0px;top:983px;width:358px;height:1px;background:#c8c8c8"></div>
<div class="a" style="left:0px;top:984px;width:358px;height:26px;background:#f0f0f0"></div>
<div class="a" style="left:357px;top:918px;width:1px;height:92px;background:#9a9a9a"></div>
<div class="a" style="left:358px;top:918px;width:7px;height:92px;background:#f4f4f4"></div>
<div class="a" style="left:365px;top:918px;width:1px;height:92px;background:#9a9a9a"></div>
<div class="a" style="left:5px;top:991px;width:3px;height:15px;background:linear-gradient(#8a8a8a,#b8b8b8 70%,#e6e6e6)"></div>
<div class="a" style="left:9px;top:991px;width:3px;height:15px;background:linear-gradient(#8a8a8a,#b8b8b8 70%,#e6e6e6)"></div>
<div class="a" style="left:13px;top:991px;width:3px;height:15px;background:linear-gradient(#8a8a8a,#b8b8b8 70%,#e6e6e6)"></div>
<div class="a" style="left:17px;top:991px;width:3px;height:15px;background:linear-gradient(#8a8a8a,#b8b8b8 70%,#e6e6e6)"></div>
<svg style="left:21px;top:997px" width="7" height="5" viewBox="0 0 7 5"><path d="M0.5 4 L6 4 L3.25 0.5 Z" fill="#111"/></svg><div class="a" style="left:30px;top:989px;width:1px;height:17px;background:#a0a0a0"></div>
<div class="t" style="left:735px;top:610px;width:40px;text-align:right;font-size:13px;color:#262626">1650</div>
<div class="t" style="left:735px;top:683px;width:40px;text-align:right;font-size:13px;color:#262626">1700</div>
<div class="t" style="left:735px;top:757px;width:40px;text-align:right;font-size:13px;color:#262626">1750</div>
<div class="t" style="left:735px;top:831px;width:40px;text-align:right;font-size:13px;color:#262626">1800</div>
<div class="t" style="left:735px;top:904px;width:40px;text-align:right;font-size:13px;color:#262626">1850</div>
<div class="a" style="left:779px;top:565px;width:1px;height:445px;background:#5a5a5a"></div>
<div class="a" style="left:780px;top:565px;width:6px;height:445px;background:linear-gradient(#3a3a3a 0%,#505050 50%,#5a5a5a 80%,#bbb 83%,#fafafa 86%,#fafafa 100%)"></div>
<div class="a" style="left:780px;top:565px;width:1px;height:363px;background:rgba(255,255,255,.35)"></div>
<div class="a" style="left:785px;top:565px;width:1px;height:363px;background:rgba(255,255,255,.3)"></div>
<div class="a" style="left:786px;top:565px;width:1px;height:445px;background:#6a6a6a"></div>
<div class="a" style="left:-23px;top:42px;width:840px;height:523px;border:1px solid #4a4a4a;border-radius:0 7px 7px 0;background:#eef0f2;box-shadow:2px 3px 12px 2px rgba(0,0,0,.6)"></div>
<div class="a" style="left:-22px;top:43px;width:837px;height:28px;border-radius:0 6px 0 0;background:linear-gradient(#54677c 0%,#8a98a6 15%,#d6dade 35%,#eceef0 55%,#eff0f0 100%)"></div>
<div class="a" style="left:-22px;top:43px;width:838px;height:1px;background:rgba(255,255,255,.85)"></div>
<div class="a" style="left:300px;top:58px;width:400px;height:12px;background:linear-gradient(90deg,rgba(190,200,210,0) ,rgba(190,200,210,.5),rgba(190,200,210,0));filter:blur(3px)"></div>
<div class="t" style="left:6px;top:50px;font-size:12px;color:#000;letter-spacing:-0.2px">Figure 2: Line_scan,Fitting</div>
<div class="a" style="left:707px;top:42px;width:103px;height:19px;border:1px solid #505a66;border-top:none;border-radius:0 0 5px 5px;background:linear-gradient(#dfe3e8,#c6ccd2 50%,#b4bcc4 51%,#d4dadf)"></div>
<div class="a" style="left:735px;top:43px;width:1px;height:17px;background:#6a7480"></div>
<div class="a" style="left:762px;top:43px;width:1px;height:17px;background:#6a7480"></div>
<div class="a" style="left:763px;top:42px;width:46px;height:18px;border:1px solid #6a2a20;border-top:none;border-radius:0 0 5px 0;background:linear-gradient(#e8a090 0%,#d8705a 45%,#c84428 50%,#d45a3a 80%,#e89a80 100%)"></div>
<div class="a" style="left:716px;top:51px;width:12px;height:5px;border:1.5px solid #384050;border-radius:1px;background:#fff"></div>
<div class="a" style="left:743px;top:46px;width:12px;height:10px;border:1.5px solid #384050;background:#e8ecf0"></div>
<div class="a" style="left:746px;top:49px;width:6px;height:4px;border:1.5px solid #384050;background:#fff"></div>
<svg style="left:0;top:0;width:1px;height:1px"><polygon points="781.70,46.85 785.19,46.85 786.50,48.99 787.81,46.85 791.30,46.85 788.16,51.00 791.30,55.15 787.81,55.15 786.50,53.01 785.19,55.15 781.70,55.15 784.84,51.00" fill="#fafafa" stroke="#2e3a4c" stroke-width="1.2" stroke-linejoin="round"/></svg><div class="a" style="left:-16px;top:70px;width:826px;height:489px;background:#f0f0f0;border-right:1px solid #6a6a6a;border-bottom:1px solid #6a6a6a"></div>
<div class="a" style="left:0px;top:70px;width:809px;height:1px;background:#8a8a8a"></div>
<div class="a" style="left:0px;top:71px;width:809px;height:25px;background:linear-gradient(#fbfbfd 0%,#eef0f6 30%,#d8dcee 32%,#d6dbee 100%)"></div>
<div class="a" style="left:0px;top:96px;width:809px;height:1px;background:#8a8a8a"></div>
<div class="t" style="left:-8px;top:78px;font-size:12px;color:#000">File</div>
<div class="t" style="left:28px;top:78px;font-size:12px;color:#000">Edit</div>
<div class="t" style="left:65px;top:78px;font-size:12px;color:#000">View</div>
<div class="t" style="left:105.5px;top:78px;font-size:12px;color:#000">Insert</div>
<div class="t" style="left:151px;top:78px;font-size:12px;color:#000">Tools</div>
<div class="t" style="left:196px;top:78px;font-size:12px;color:#000">Desktop</div>
<div class="t" style="left:255px;top:78px;font-size:12px;color:#000">Window</div>
<div class="t" style="left:316px;top:78px;font-size:12px;color:#000">Help</div>
<svg style="left:797px;top:80px" width="8" height="7" viewBox="0 0 8 7"><circle cx="0.8" cy="2.2" r=".8" fill="#000"/><path d="M2 1.3 L6 5" stroke="#000" stroke-width="1.7"/><path d="M6.2 0.8 L7.4 0.8 L7.4 6.2 L2 6.2 L2 5 L6.2 5 Z" fill="#000"/></svg><div class="a" style="left:0px;top:97px;width:810px;height:25px;background:#f0f0f0"></div>
<div class="a" style="left:0;top:97px;width:810px;height:26px;overflow:hidden"><svg style="left:-10px;top:-1px" width="420" height="28" viewBox="-10 96 420 28"><path d="M-8 102 L0 102 L3 105 L3 116 L-8 116 Z" fill="#fff" stroke="#5a78a8" stroke-width="1"/><path d="M11.5 106 L11.5 115.5 L24 115.5 L26 108 L15 108 L14 106 Z" fill="#f6d96a" stroke="#b08a1a" stroke-width="1"/><path d="M13 109 L26 109 L24 115.5 L11.5 115.5 Z" fill="#fbe68e" stroke="#b08a1a" stroke-width="1"/><path d="M18 104 Q21 101 24 103" fill="none" stroke="#4a7ac8" stroke-width="1.3"/><path d="M23 101.5 L25.5 103.5 L22.5 104.5 Z" fill="#4a7ac8"/><rect x="35.5" y="102.5" width="14" height="14" fill="#5c5cc8" stroke="#2e2e8a" stroke-width="1"/><rect x="38" y="103" width="9" height="6" fill="#f4f4fc"/><rect x="39" y="111" width="7" height="5" fill="#dcdcec"/><rect x="40" y="112.5" width="2" height="2.5" fill="#222"/><path d="M61 101.5 L68 101.5 L70 107 L59 107 Z" fill="#d8ecfa" stroke="#8aa0b4" stroke-width="1"/><path d="M58 108 L72 108 L73 113 L72 116 L58 116 L57 113 Z" fill="#c8c8c8" stroke="#6a6a6a" stroke-width="1"/><rect x="59" y="110" width="12" height="2" fill="#9a9a9a"/><circle cx="70" cy="109.6" r=".8" fill="#3a3"/><rect x="80.0" y="100" width="1" height="20" fill="#a8a8a8"/><rect x="111.0" y="100" width="1" height="20" fill="#a8a8a8"/><rect x="269.0" y="100" width="1" height="20" fill="#a8a8a8"/><rect x="300.0" y="100" width="1" height="20" fill="#a8a8a8"/><rect x="354.0" y="100" width="1" height="20" fill="#a8a8a8"/><path d="M93.5 102.5 L93.5 114 L96.5 111.5 L98.8 116.8 L100.8 115.9 L98.6 110.8 L102.3 110.8 Z" fill="#fff" stroke="#000" stroke-width="1"/><path d="M127.5 110 L134 116" stroke="#d88a20" stroke-width="2.6" stroke-linecap="round"/><circle cx="124.5" cy="106.5" r="5" fill="#eaf4ff" stroke="#5a8ac8" stroke-width="1.3"/><rect x="122" y="105.8" width="5" height="1.5" fill="#1a3a8a"/><rect x="123.8" y="104" width="1.5" height="5" fill="#1a3a8a"/><path d="M150.5 110 L157 116" stroke="#d88a20" stroke-width="2.6" stroke-linecap="round"/><circle cx="147.5" cy="106.5" r="5" fill="#eaf4ff" stroke="#5a8ac8" stroke-width="1.3"/><rect x="145" y="105.8" width="5" height="1.5" fill="#1a3a8a"/><path d="M167 111 Q165 108 167 107 L169 109 L168 103 Q169 101.5 170.5 103 L171.5 107 L172 102 Q173.5 100.5 175 102 L175 107 L176.5 103 Q178 102 179 103.5 L178.5 108 L180 106 Q181.5 106 181 108 L178 115 Q176 117 172 117 Q169 117 167 111 Z" fill="#f6dcc0" stroke="#3a5ac8" stroke-width="1"/><path d="M190 106 A7 7 0 1 0 196 102" fill="none" stroke="#2a4a8a" stroke-width="2.2"/><path d="M188 103 L193 101 L192 106 Z" fill="#2a4a8a"/><path d="M193.5 106.5 L197 105 L200.5 106.5 L200.5 111 L197 112.5 L193.5 111 Z" fill="none" stroke="#5a7ab8" stroke-width="1"/><rect x="216.5" y="101.5" width="9.5" height="9" fill="#f6f0b0" stroke="#a89a30" stroke-width="1"/><path d="M218 104 L224.5 104 M218 106 L224.5 106 M218 108 L224.5 108" stroke="#a89a30" stroke-width=".8"/><path d="M211 104 Q213 110 217 113 Q221 116 226 116.5" fill="none" stroke="#2a2ae0" stroke-width="1" stroke-dasharray="2 1.2"/><path d="M212.5 113 L219.5 113 M216 109.5 L216 116.5" stroke="#000" stroke-width="2"/><path d="M236 116 Q235 112 239 110 L241 112 Q240 116 236 116 Z" fill="#444" stroke="#222" stroke-width=".8"/><path d="M239.5 109.5 L249 101.5 L250.5 103 L241.5 111.5 Z" fill="#8aa8e8" stroke="#3a5ab8" stroke-width="1"/><rect x="245" y="110.5" width="5" height="5" fill="#ff0000"/><path d="M258 108.5 L262.5 108.5 L260.2 111 Z" fill="#333"/><rect x="279.5" y="101.5" width="10" height="8" fill="#f6f8fc" stroke="#3a5a9a" stroke-width="1"/><rect x="279.5" y="101.5" width="10" height="1.8" fill="#3a5a9a"/><rect x="277" y="104" width="10" height="8" fill="#f6f8fc" stroke="#3a5a9a" stroke-width="1"/><rect x="277" y="104" width="10" height="1.8" fill="#3a5a9a"/><rect x="277.5" y="111.5" width="7" height="4" rx="2" fill="none" stroke="#6a7ab0" stroke-width="1.4"/><rect x="284.5" y="111.5" width="7" height="4" rx="2" fill="none" stroke="#6a7ab0" stroke-width="1.4"/><defs><linearGradient id="cbg" x1="0" y1="0" x2="0" y2="1"><stop offset="0" stop-color="#7a7ae8"/><stop offset=".5" stop-color="#9ae0d0"/><stop offset="1" stop-color="#f6c080"/></linearGradient></defs><rect x="311.5" y="101.5" width="9" height="14.5" fill="url(#cbg)" stroke="#2a3a7a" stroke-width="1"/><rect x="331" y="101.5" width="15" height="14.5" fill="#fff" stroke="#2a3a7a" stroke-width="1"/><rect x="333" y="104" width="4" height="3" fill="#e86a6a"/><rect x="333" y="110" width="4" height="3" fill="#6a6ae8"/><path d="M339 105.5 L344 105.5 M339 111.5 L344 111.5" stroke="#000" stroke-width="1"/><rect x="365" y="104" width="10.5" height="10" fill="#a8a8a8" stroke="#8a8a8a" stroke-width=".8"/><rect x="385.5" y="102.5" width="14.5" height="13.5" fill="#fff" stroke="#2a4a9a" stroke-width="1.6"/><rect x="388" y="105" width="9.5" height="8.5" fill="#fff" stroke="#2a4a9a" stroke-width=".8"/></svg></div><div class="a" style="left:0px;top:122px;width:810px;height:1px;background:#a0a0a0"></div>
<div class="a" style="left:92px;top:201px;width:639px;height:97px;background:#fff;border:1px solid #262626"></div>
<div class="a" style="left:92px;top:201px;width:6px;height:1px;background:#262626"></div>
<div class="a" style="left:726px;top:201px;width:6px;height:1px;background:#262626"></div>
<div class="a" style="left:92px;top:233px;width:6px;height:1px;background:#262626"></div>
<div class="a" style="left:726px;top:233px;width:6px;height:1px;background:#262626"></div>
<div class="a" style="left:92px;top:265px;width:6px;height:1px;background:#262626"></div>
<div class="a" style="left:726px;top:265px;width:6px;height:1px;background:#262626"></div>
<div class="a" style="left:92px;top:297px;width:6px;height:1px;background:#262626"></div>
<div class="a" style="left:726px;top:297px;width:6px;height:1px;background:#262626"></div>
<div class="a" style="left:92px;top:201px;width:1px;height:6px;background:#262626"></div>
<div class="a" style="left:92px;top:292px;width:1px;height:6px;background:#262626"></div>
<div class="a" style="left:220px;top:201px;width:1px;height:6px;background:#262626"></div>
<div class="a" style="left:220px;top:292px;width:1px;height:6px;background:#262626"></div>
<div class="a" style="left:348px;top:201px;width:1px;height:6px;background:#262626"></div>
<div class="a" style="left:348px;top:292px;width:1px;height:6px;background:#262626"></div>
<div class="a" style="left:475px;top:201px;width:1px;height:6px;background:#262626"></div>
<div class="a" style="left:475px;top:292px;width:1px;height:6px;background:#262626"></div>
<div class="a" style="left:603px;top:201px;width:1px;height:6px;background:#262626"></div>
<div class="a" style="left:603px;top:292px;width:1px;height:6px;background:#262626"></div>
<div class="a" style="left:731px;top:201px;width:1px;height:6px;background:#262626"></div>
<div class="a" style="left:731px;top:292px;width:1px;height:6px;background:#262626"></div>
<div class="t" style="left:46.5px;top:196px;width:40px;text-align:right;font-size:13px;color:#262626">10</div>
<div class="t" style="left:46.5px;top:228px;width:40px;text-align:right;font-size:13px;color:#262626">5</div>
<div class="t" style="left:46.5px;top:260px;width:40px;text-align:right;font-size:13px;color:#262626">0</div>
<div class="t" style="left:46.5px;top:292px;width:40px;text-align:right;font-size:13px;color:#262626">-5</div>
<div class="t" style="left:72px;top:305px;width:40px;text-align:center;font-size:13px;color:#262626">0</div>
<div class="t" style="left:200px;top:305px;width:40px;text-align:center;font-size:13px;color:#262626">0.5</div>
<div class="t" style="left:328px;top:305px;width:40px;text-align:center;font-size:13px;color:#262626">1</div>
<div class="t" style="left:455px;top:305px;width:40px;text-align:center;font-size:13px;color:#262626">1.5</div>
<div class="t" style="left:583px;top:305px;width:40px;text-align:center;font-size:13px;color:#262626">2</div>
<div class="t" style="left:711px;top:305px;width:40px;text-align:center;font-size:13px;color:#262626">2.5</div>
<div class="t" style="left:92px;top:184px;font-size:13px;color:#262626"><span style="font-size:14px;color:#6a6a6a;font-weight:normal;position:relative;top:2px">&#215;</span><span style="margin-left:3px">10</span><span style="position:relative;top:-5px;font-size:11.5px;margin-left:.5px">-7</span></div>
<div class="t" style="left:696px;top:326px;font-size:13px;color:#262626"><span style="font-size:14px;color:#6a6a6a;font-weight:normal;position:relative;top:2px">&#215;</span><span style="margin-left:3px">10</span><span style="position:relative;top:-5px;font-size:11.5px;margin-left:.5px">-3</span></div>
<div class="t" style="left:311px;top:182px;width:200px;text-align:center;font-size:14.6px;font-weight:bold;color:#000">Line scan</div>
<svg style="left:0;top:0" width="816" height="565" viewBox="0 0 816 565"><polyline points="92.5,262.9 94.0,261.5 95.5,260.4 97.0,259.0 98.5,260.3 100.0,261.7 101.5,262.7 103.0,261.8 104.5,260.5 106.0,259.3 107.5,259.2 109.0,260.7 110.5,261.7 112.0,262.2 113.5,262.4 115.0,260.5 116.5,260.9 118.0,260.5 119.5,261.4 121.0,262.2 122.5,260.5 124.0,259.1 125.5,258.3 127.0,258.9 128.5,260.2 130.0,261.4 131.5,260.6 133.0,259.7 134.5,258.5 136.0,258.9 137.5,259.7 139.0,260.9 140.5,261.1 142.0,260.0 143.5,258.7 145.0,257.7 146.5,259.4 148.0,260.4 149.5,261.3 151.0,260.2 152.5,258.7 154.0,257.5 155.5,258.0 157.0,258.8 158.5,260.4 160.0,259.9 161.5,259.2 163.0,257.8 164.5,257.9 166.0,258.7 167.5,258.9 169.0,259.7 170.5,259.3 172.0,257.9 173.5,257.4 175.0,257.6 176.5,258.2 178.0,259.6 179.5,259.2 181.0,257.8 182.5,256.6 184.0,256.9 185.5,258.3 187.0,258.9 188.5,258.5 190.0,257.7 191.5,256.7 193.0,256.0 194.5,257.4 196.0,257.6 197.5,258.7 199.0,257.8 200.5,256.7 202.0,256.3 203.5,256.1 205.0,257.3 206.5,257.5 208.0,257.6 209.5,256.6 211.0,255.9 212.5,256.2 214.0,256.7 215.5,256.9 217.0,257.9 218.5,256.5 220.0,255.9 221.5,255.6 223.0,255.9 224.5,256.0 226.0,257.4 227.5,256.3 229.0,255.6 230.5,255.4 232.0,255.0 233.5,255.5 235.0,255.8 236.5,255.9 238.0,255.7 239.5,254.7 241.0,254.6 242.5,254.9 244.0,255.4 245.5,256.3 247.0,255.3 248.5,254.8 250.0,254.5 251.5,254.1 253.0,254.4 254.5,255.5 256.0,255.3 257.5,254.3 259.0,253.7 260.5,253.9 262.0,254.5 263.5,254.2 265.0,255.1 266.5,254.5 268.0,253.8 269.5,253.1 271.0,253.1 272.5,253.3 274.0,254.5 275.5,253.6 277.0,253.5 278.5,252.7 280.0,253.1 281.5,253.2 283.0,253.2 284.5,253.1 286.0,253.1 287.5,252.2 289.0,252.0 290.5,252.5 292.0,253.0 293.5,252.9 295.0,252.3 296.5,252.5 298.0,251.6 299.5,251.4 301.0,251.8 302.5,251.8 304.0,251.4 305.5,251.4 307.0,251.5 308.5,251.6 310.0,251.1 311.5,251.2 313.0,251.6 314.5,251.6 316.0,251.2 317.5,251.1 319.0,250.9 320.5,250.5 322.0,250.3 323.5,250.1 325.0,250.9 326.5,250.6 328.0,250.7 329.5,249.8 331.0,250.2 332.5,250.0 334.0,250.1 335.5,249.6 337.0,250.2 338.5,249.2 340.0,249.6 341.5,249.6 343.0,249.7 344.5,249.4 346.0,249.3 347.5,249.3 349.0,249.3 350.5,248.7 352.0,248.9 353.5,249.0 355.0,248.8 356.5,248.3 358.0,248.5 359.5,248.5 361.0,248.1 362.5,248.1 364.0,247.8 365.5,247.8 367.0,247.8 368.5,247.2 370.0,247.6 371.5,247.8 373.0,247.6 374.5,247.3 376.0,246.9 377.5,247.1 379.0,246.9 380.5,246.6 382.0,246.9 383.5,246.1 385.0,246.6 386.5,245.8 388.0,246.2 389.5,246.0 391.0,245.7 392.5,246.0 394.0,245.7 395.5,245.7 397.0,245.8 398.5,245.1 400.0,244.8 401.5,244.9 403.0,245.2 404.5,244.6 406.0,244.5 407.5,245.0 409.0,244.7 410.5,244.4 412.0,244.7 413.5,244.0 415.0,244.2 416.5,243.7 418.0,243.8 419.5,244.0 421.0,244.0 422.5,243.8 424.0,243.3 425.5,243.3 427.0,243.0 428.5,242.7 430.0,242.9 431.5,243.1 433.0,243.0 434.5,242.7 436.0,242.8 437.5,242.1 439.0,241.9 440.5,242.0 442.0,241.7 443.5,241.5 445.0,241.6 446.5,241.7 448.0,241.4 449.5,241.1 451.0,241.5 452.5,241.5 454.0,240.9 455.5,240.4 457.0,240.2 458.5,240.9 460.0,240.0 461.5,240.5 463.0,240.2 464.5,239.9 466.0,240.2 467.5,239.3 469.0,239.3 470.5,239.5 472.0,238.9 473.5,239.5 475.0,238.9 476.5,238.7 478.0,238.4 479.5,238.8 481.0,238.5 482.5,238.6 484.0,238.5 485.5,238.5 487.0,238.5 488.5,238.1 490.0,237.5 491.5,237.6 493.0,237.2 494.5,236.9 496.0,237.2 497.5,237.3 499.0,236.7 500.5,236.6 502.0,236.6 503.5,236.7 505.0,236.4 506.5,236.4 508.0,236.4 509.5,235.9 511.0,236.1 512.5,236.1 514.0,235.2 515.5,235.8 517.0,235.5 518.5,234.8 520.0,235.0 521.5,235.0 523.0,235.1 524.5,234.5 526.0,234.5 527.5,234.6 529.0,234.4 530.5,234.4 532.0,233.8 533.5,233.9 535.0,233.3 536.5,233.6 538.0,233.6 539.5,233.3 541.0,233.2 542.5,232.6 544.0,233.1 545.5,233.0 547.0,232.8 548.5,232.3 550.0,232.4 551.5,231.8 553.0,232.2 554.5,232.0 556.0,231.4 557.5,231.0 559.0,231.2 560.5,231.1 562.0,231.1 563.5,230.7 565.0,230.2 566.5,230.7 568.0,229.9 569.5,230.4 571.0,229.7 572.5,229.7 574.0,229.9 575.5,229.2 577.0,229.1 578.5,229.2 580.0,229.3 581.5,229.2 583.0,228.9 584.5,229.0 586.0,228.4 587.5,228.7 589.0,227.7 590.5,227.7 592.0,227.8 593.5,227.4 595.0,227.7 596.5,227.4 598.0,227.2 599.5,227.3 601.0,226.9 602.5,226.5 604.0,226.4 605.5,226.7 607.0,226.6 608.5,225.8 610.0,226.2 611.5,226.1 613.0,225.6 614.5,225.4 616.0,224.9 617.5,225.1 619.0,224.9 620.5,224.8 622.0,224.1 623.5,224.8 625.0,224.2 626.5,224.0 628.0,224.2 629.5,223.8 631.0,223.5 632.5,223.5 634.0,222.8 635.5,223.1 637.0,222.8 638.5,223.1 640.0,222.9 641.5,222.2 643.0,222.2 644.5,221.7 646.0,221.8 647.5,222.0 649.0,221.9 650.5,221.3 652.0,221.0 653.5,220.7 655.0,220.9 656.5,221.0 658.0,220.1 659.5,220.5 661.0,219.7 662.5,219.7 664.0,219.5 665.5,219.8 667.0,219.3 668.5,219.1 670.0,219.2 671.5,218.5 673.0,218.9 674.5,218.2 676.0,218.4 677.5,217.9 679.0,217.7 680.5,217.8 682.0,217.6 683.5,217.3 685.0,217.2 686.5,217.1 688.0,216.6 689.5,216.5 691.0,216.7 692.5,216.5 694.0,216.2 695.5,216.3 697.0,215.9 698.5,215.9 700.0,215.2 701.5,215.5 703.0,215.4 704.5,215.3 706.0,214.5 707.5,214.4 709.0,214.7 710.5,213.9 712.0,214.4 713.5,214.1 715.0,213.3 716.5,213.2 718.0,213.4 719.5,212.8" fill="none" stroke="#0072bd" stroke-width="1.1"/></svg><div class="a" style="left:92px;top:406px;width:639px;height:98px;background:#fff;border:1px solid #262626"></div>
<div class="a" style="left:92px;top:412px;width:6px;height:1px;background:#262626"></div>
<div class="a" style="left:726px;top:412px;width:6px;height:1px;background:#262626"></div>
<div class="a" style="left:92px;top:431px;width:6px;height:1px;background:#262626"></div>
<div class="a" style="left:726px;top:431px;width:6px;height:1px;background:#262626"></div>
<div class="a" style="left:92px;top:450px;width:6px;height:1px;background:#262626"></div>
<div class="a" style="left:726px;top:450px;width:6px;height:1px;background:#262626"></div>
<div class="a" style="left:92px;top:470px;width:6px;height:1px;background:#262626"></div>
<div class="a" style="left:726px;top:470px;width:6px;height:1px;background:#262626"></div>
<div class="a" style="left:92px;top:489px;width:6px;height:1px;background:#262626"></div>
<div class="a" style="left:726px;top:489px;width:6px;height:1px;background:#262626"></div>
<div class="a" style="left:132px;top:406px;width:1px;height:6px;background:#262626"></div>
<div class="a" style="left:132px;top:498px;width:1px;height:6px;background:#262626"></div>
<div class="a" style="left:218px;top:406px;width:1px;height:6px;background:#262626"></div>
<div class="a" style="left:218px;top:498px;width:1px;height:6px;background:#262626"></div>
<div class="a" style="left:305px;top:406px;width:1px;height:6px;background:#262626"></div>
<div class="a" style="left:305px;top:498px;width:1px;height:6px;background:#262626"></div>
<div class="a" style="left:391px;top:406px;width:1px;height:6px;background:#262626"></div>
<div class="a" style="left:391px;top:498px;width:1px;height:6px;background:#262626"></div>
<div class="a" style="left:477px;top:406px;width:1px;height:6px;background:#262626"></div>
<div class="a" style="left:477px;top:498px;width:1px;height:6px;background:#262626"></div>
<div class="a" style="left:564px;top:406px;width:1px;height:6px;background:#262626"></div>
<div class="a" style="left:564px;top:498px;width:1px;height:6px;background:#262626"></div>
<div class="a" style="left:650px;top:406px;width:1px;height:6px;background:#262626"></div>
<div class="a" style="left:650px;top:498px;width:1px;height:6px;background:#262626"></div>
<div class="t" style="left:46.5px;top:406px;width:40px;text-align:right;font-size:13px;color:#262626">15</div>
<div class="t" style="left:46.5px;top:426px;width:40px;text-align:right;font-size:13px;color:#262626">10</div>
<div class="t" style="left:46.5px;top:445px;width:40px;text-align:right;font-size:13px;color:#262626">5</div>
<div class="t" style="left:46.5px;top:464px;width:40px;text-align:right;font-size:13px;color:#262626">0</div>
<div class="t" style="left:46.5px;top:484px;width:40px;text-align:right;font-size:13px;color:#262626">-5</div>
<div class="t" style="left:112px;top:511px;width:40px;text-align:center;font-size:13px;color:#262626">-2</div>
<div class="t" style="left:198px;top:511px;width:40px;text-align:center;font-size:13px;color:#262626">-1</div>
<div class="t" style="left:285px;top:511px;width:40px;text-align:center;font-size:13px;color:#262626">0</div>
<div class="t" style="left:371px;top:511px;width:40px;text-align:center;font-size:13px;color:#262626">1</div>
<div class="t" style="left:457px;top:511px;width:40px;text-align:center;font-size:13px;color:#262626">2</div>
<div class="t" style="left:544px;top:511px;width:40px;text-align:center;font-size:13px;color:#262626">3</div>
<div class="t" style="left:630px;top:511px;width:40px;text-align:center;font-size:13px;color:#262626">4</div>
<div class="t" style="left:92px;top:390px;font-size:13px;color:#262626"><span style="font-size:14px;color:#6a6a6a;font-weight:normal;position:relative;top:2px">&#215;</span><span style="margin-left:3px">10</span><span style="position:relative;top:-5px;font-size:11.5px;margin-left:.5px">-7</span></div>
<div class="t" style="left:696px;top:533px;font-size:13px;color:#262626"><span style="font-size:14px;color:#6a6a6a;font-weight:normal;position:relative;top:2px">&#215;</span><span style="margin-left:3px">10</span><span style="position:relative;top:-5px;font-size:11.5px;margin-left:.5px">-3</span></div>
<div class="t" style="left:211px;top:346px;width:400px;text-align:center;font-size:15px;font-weight:bold;color:#000">Fitting</div>
<div class="t" style="left:211px;top:366px;width:400px;text-align:center;font-size:15px;font-weight:bold;color:#000">Radius of curvature = 5.3025m</div>
<div class="t" style="left:211px;top:386px;width:400px;text-align:center;font-size:15px;font-weight:bold;color:#000">Fitting Score = 0.068549</div>
<svg style="left:0;top:0" width="816" height="565" viewBox="0 0 816 565"><defs><clipPath id="ax2"><rect x="93" y="407" width="637" height="95"/></clipPath></defs><g clip-path="url(#ax2)"><polyline points="92.9,454.6 97.2,455.2 101.6,455.9 105.9,456.5 110.2,457.1 114.5,457.7 118.8,458.3 123.2,458.9 127.5,459.4 131.8,460.0 136.1,460.5 140.4,461.0 144.8,461.4 149.1,461.9 153.4,462.3 157.7,462.8 162.0,463.2 166.4,463.6 170.7,463.9 175.0,464.3 179.3,464.6 183.6,465.0 188.0,465.3 192.3,465.5 196.6,465.8 200.9,466.1 205.2,466.3 209.6,466.5 213.9,466.7 218.2,466.9 222.5,467.1 226.8,467.2 231.2,467.3 235.5,467.5 239.8,467.5 244.1,467.6 248.4,467.7 252.8,467.7 257.1,467.8 261.4,467.8 265.7,467.8 270.0,467.7 274.4,467.7 278.7,467.6 283.0,467.5 287.3,467.5 291.6,467.3 296.0,467.2 300.3,467.1 304.6,466.9 308.9,466.7 313.2,466.5 317.6,466.3 321.9,466.1 326.2,465.8 330.5,465.5 334.8,465.3 339.2,465.0 343.5,464.6 347.8,464.3 352.1,463.9 356.4,463.6 360.8,463.2 365.1,462.8 369.4,462.3 373.7,461.9 378.0,461.4 382.4,461.0 386.7,460.5 391.0,460.0 395.3,459.4 399.6,458.9 404.0,458.3 408.3,457.7 412.6,457.1 416.9,456.5 421.2,455.9 425.6,455.2 429.9,454.6 434.2,453.9 438.5,453.2 442.8,452.5 447.2,451.7 451.5,451.0 455.8,450.2 460.1,449.4 464.4,448.6 468.8,447.8 473.1,446.9 477.4,446.1 481.7,445.2 486.0,444.3 490.4,443.4 494.7,442.5 499.0,441.5 503.3,440.6 507.6,439.6 512.0,438.6 516.3,437.6 520.6,436.5 524.9,435.5 529.2,434.4 533.6,433.3 537.9,432.2 542.2,431.1 546.5,430.0 550.8,428.8 555.2,427.7 559.5,426.5 563.8,425.3 568.1,424.0 572.4,422.8 576.8,421.5 581.1,420.3 585.4,419.0 589.7,417.7 594.0,416.3 598.4,415.0 602.7,413.6 607.0,412.3 611.3,410.9 615.6,409.4 620.0,408.0 624.3,406.6 628.6,405.1" fill="none" stroke="#0072bd" stroke-width="1.1"/><polygon points="304.6,462.3 307.2,462.6 309.8,462.4 312.4,460.9 315.0,462.6 317.6,462.4 320.2,461.4 322.7,461.5 325.3,460.3 327.9,460.7 330.5,461.5 333.1,461.4 335.7,460.9 338.3,459.5 340.9,459.8 343.5,461.2 346.1,459.6 348.7,459.9 351.3,459.1 353.8,459.8 356.4,460.0 359.0,458.8 361.6,458.1 364.2,458.2 366.8,457.4 369.4,457.8 372.0,458.5 374.6,457.3 377.2,457.8 379.8,458.1 382.4,457.4 385.0,455.7 387.5,456.1 390.1,455.1 392.7,455.1 395.3,454.9 397.9,456.0 400.5,454.5 403.1,454.6 405.7,453.4 408.3,454.5 410.9,452.6 413.5,452.4 416.1,453.1 418.6,452.2 421.2,452.3 423.8,451.4 426.4,450.6 429.0,451.4 431.6,450.0 434.2,451.3 436.8,449.7 439.4,449.7 442.0,449.0 444.6,447.8 447.2,447.3 449.8,448.5 452.3,447.9 454.9,447.2 457.5,445.7 460.1,445.4 462.7,445.2 465.3,446.1 467.9,445.6 470.5,444.2 473.1,443.7 475.7,443.0 478.3,442.5 480.9,443.1 483.4,441.7 486.0,440.4 488.6,441.2 491.2,439.9 493.8,440.2 496.4,439.4 499.0,438.3 501.6,437.5 504.2,438.0 506.8,436.4 509.4,436.6 512.0,434.7 514.6,434.6 517.1,434.5 519.7,434.2 519.7,440.2 517.1,440.8 514.6,441.2 512.0,441.6 509.4,442.3 506.8,443.6 504.2,443.7 501.6,443.9 499.0,444.9 496.4,445.6 493.8,446.1 491.2,446.9 488.6,447.6 486.0,447.0 483.4,447.7 480.9,448.8 478.3,450.1 475.7,448.9 473.1,449.8 470.5,451.2 467.9,451.1 465.3,452.5 462.7,452.2 460.1,453.5 457.5,453.1 454.9,454.3 452.3,455.2 449.8,454.0 447.2,455.2 444.6,456.5 442.0,456.0 439.4,457.2 436.8,456.5 434.2,457.6 431.6,457.0 429.0,459.3 426.4,458.1 423.8,458.6 421.2,459.2 418.6,460.9 416.1,461.3 413.5,460.5 410.9,462.1 408.3,462.3 405.7,462.4 403.1,462.9 400.5,462.4 397.9,463.9 395.3,463.9 392.7,464.6 390.1,463.2 387.5,464.6 385.0,465.3 382.4,465.7 379.8,464.4 377.2,464.8 374.6,465.9 372.0,466.2 369.4,466.2 366.8,467.2 364.2,467.3 361.6,466.5 359.0,467.0 356.4,467.5 353.8,469.1 351.3,469.3 348.7,469.0 346.1,469.8 343.5,469.8 340.9,468.7 338.3,470.2 335.7,469.0 333.1,469.2 330.5,469.4 327.9,471.1 325.3,469.9 322.7,470.8 320.2,470.3 317.6,470.2 315.0,471.4 312.4,471.2 309.8,472.3 307.2,472.5 304.6,472.2" fill="#ff0000" stroke="#ff0000" stroke-width="1"/></g></svg><div class="a" style="left:15px;top:602px;width:672px;height:317px;border:1px solid #4e4e4e;border-radius:7px;background:linear-gradient(90deg,#f6f7f8,#fdfdfd 30%,#f4f5f6 50%,#fcfcfc 80%,#f2f3f4);box-shadow:2px 3px 9px rgba(0,0,0,.35)"></div>
<div class="a" style="left:16px;top:603px;width:670px;height:28px;border-radius:6px 6px 0 0;background:linear-gradient(90deg,#fafafa,#fefefe 20%,#f0f1f2 35%,#fdfdfd 55%,#f6f6f6 75%,#fbfbfb)"></div>
<div class="a" style="left:23px;top:609px;width:16px;height:16px;border:1px solid #9aa0a8;background:linear-gradient(#e0e8f2,#f8f8f8)"></div>
<svg style="left:24px;top:611px" width="14" height="14" viewBox="0 0 20 20">
<defs><linearGradient id="mlg24" x1="0" y1="0" x2="1" y2="0"><stop offset="0" stop-color="#8a1a10"/><stop offset=".45" stop-color="#e87a30"/><stop offset=".6" stop-color="#f0b040"/><stop offset="1" stop-color="#d04020"/></linearGradient></defs>
<path d="M1 12.5 L5.8 9.5 L7.2 11 L5 14 Z" fill="#3fa0e0"/>
<path d="M5 14 L11 3.5 L16 15.5 L12.5 13.5 L7.5 19 Z" fill="url(#mlg24)"/>
<path d="M5 14 L7.5 19 L10 15.5 Z" fill="#f0b030" opacity=".8"/>
</svg><div class="t" style="left:44px;top:611px;font-size:12px;color:#000">Slider</div>
<div class="a" style="left:577px;top:602px;width:103px;height:20px;border:1px solid #9a9a9a;border-top:none;border-radius:0 0 5px 5px;background:linear-gradient(#fdfdfd,#f4f4f4 50%,#ececec 51%,#f8f8f8)"></div>
<div class="a" style="left:605px;top:603px;width:1px;height:18px;background:#c8c8c8"></div>
<div class="a" style="left:632px;top:603px;width:1px;height:18px;background:#c8c8c8"></div>
<div class="a" style="left:586px;top:611px;width:12px;height:5px;border:1.5px solid #3a4256;border-radius:1px;background:#fff"></div>
<div class="a" style="left:613px;top:607px;width:12px;height:10px;border:1.2px solid #b8bcc4;background:#fafafa"></div>
<div class="a" style="left:616px;top:610px;width:6px;height:4px;border:1.2px solid #b8bcc4"></div>
<svg style="left:0;top:0;width:1px;height:1px"><polygon points="651.70,607.45 655.19,607.45 656.50,609.54 657.81,607.45 661.30,607.45 658.16,611.50 661.30,615.55 657.81,615.55 656.50,613.46 655.19,615.55 651.70,615.55 654.84,611.50" fill="#f6f6f6" stroke="#3a4256" stroke-width="1.2" stroke-linejoin="round"/></svg><div class="a" style="left:577px;top:602px;width:103px;height:1px;background:#6a6a6a"></div>
<div class="a" style="left:22px;top:631px;width:658px;height:281px;background:#f0f0f0;border:1px solid #767676"></div>
<div class="t" style="left:66px;top:660px;width:16px;text-align:center;font-size:16px;color:#000">Y</div>
<div class="t" style="left:228px;top:652px;font-size:17.5px;color:#000;letter-spacing:.75px">move line</div>
<div class="t" style="left:337px;top:651px;font-size:16.5px;color:#000">X: 828</div>
<div class="t" style="left:578px;top:655px;font-size:15.5px;color:#000;letter-spacing:-.3px">In Y verkürzen</div>
<div class="a" style="left:49px;top:681px;width:51px;height:150px;background:#f0f0f0"></div>
<div class="a" style="left:50px;top:682px;width:49px;height:14px;background:#f2f2f2;border-top:1px solid #fff;border-left:1px solid #fff"></div>
<div class="a" style="left:98px;top:681px;width:2px;height:16px;background:#6e6e6e"></div>
<div class="a" style="left:49px;top:695px;width:51px;height:2px;background:#6e6e6e"></div>
<svg style="left:70.5px;top:686px" width="8" height="5" viewBox="0 0 8 5"><path d="M0 5 L8 5 L4 0 Z" fill="#6a6a6a"/></svg><div class="a" style="left:49px;top:697px;width:51px;height:55px;background:#e4e4e4;border-left:2px solid #6e6e6e;border-right:2px solid #6e6e6e"></div>
<div class="a" style="left:49px;top:752px;width:51px;height:9px;background:#f4f4f4;border-top:1px solid #fff"></div>
<div class="a" style="left:98px;top:752px;width:2px;height:9px;background:#6e6e6e"></div>
<div class="a" style="left:49px;top:760px;width:51px;height:2px;background:#6e6e6e"></div>
<div class="a" style="left:49px;top:762px;width:51px;height:54px;background:#e4e4e4;border-left:2px solid #6e6e6e;border-right:2px solid #6e6e6e"></div>
<div class="a" style="left:50px;top:816px;width:48px;height:13px;background:#f2f2f2;border-top:1px solid #fff;border-left:1px solid #fff"></div>
<div class="a" style="left:98px;top:816px;width:2px;height:15px;background:#6e6e6e"></div>
<div class="a" style="left:49px;top:829px;width:51px;height:2px;background:#6e6e6e"></div>
<svg style="left:70.5px;top:821px" width="8" height="5" viewBox="0 0 8 5"><path d="M0 0 L8 0 L4 5 Z" fill="#6a6a6a"/></svg><div class="a" style="left:603px;top:681px;width:51px;height:150px;background:#f0f0f0"></div>
<div class="a" style="left:604px;top:682px;width:49px;height:14px;background:#f2f2f2;border-top:1px solid #fff;border-left:1px solid #fff"></div>
<div class="a" style="left:652px;top:681px;width:2px;height:16px;background:#6e6e6e"></div>
<div class="a" style="left:603px;top:695px;width:51px;height:2px;background:#6e6e6e"></div>
<svg style="left:624.5px;top:686px" width="8" height="5" viewBox="0 0 8 5"><path d="M0 5 L8 5 L4 0 Z" fill="#6a6a6a"/></svg><div class="a" style="left:603px;top:697px;width:51px;height:55px;background:#e4e4e4;border-left:2px solid #6e6e6e;border-right:2px solid #6e6e6e"></div>
<div class="a" style="left:603px;top:752px;width:51px;height:9px;background:#f4f4f4;border-top:1px solid #fff"></div>
<div class="a" style="left:652px;top:752px;width:2px;height:9px;background:#6e6e6e"></div>
<div class="a" style="left:603px;top:760px;width:51px;height:2px;background:#6e6e6e"></div>
<div class="a" style="left:603px;top:762px;width:51px;height:54px;background:#e4e4e4;border-left:2px solid #6e6e6e;border-right:2px solid #6e6e6e"></div>
<div class="a" style="left:604px;top:816px;width:48px;height:13px;background:#f2f2f2;border-top:1px solid #fff;border-left:1px solid #fff"></div>
<div class="a" style="left:652px;top:816px;width:2px;height:15px;background:#6e6e6e"></div>
<div class="a" style="left:603px;top:829px;width:51px;height:2px;background:#6e6e6e"></div>
<svg style="left:624.5px;top:821px" width="8" height="5" viewBox="0 0 8 5"><path d="M0 0 L8 0 L4 5 Z" fill="#6a6a6a"/></svg><div class="a" style="left:122px;top:683px;width:291px;height:48px;background:#f0f0f0"></div>
<div class="a" style="left:122px;top:683px;width:16px;height:46px;background:#f2f2f2;border-top:1px solid #fff;border-left:1px solid #fff"></div>
<svg style="left:127px;top:702px" width="5" height="8" viewBox="0 0 5 8"><path d="M5 0 L5 8 L0 4 Z" fill="#6a6a6a"/></svg><div class="a" style="left:137px;top:683px;width:128px;height:46px;background:#e4e4e4;border-left:2px solid #6e6e6e;border-top:2px solid #6e6e6e"></div>
<div class="a" style="left:265px;top:683px;width:21px;height:46px;background:#f4f4f4;border-left:1px solid #fff"></div>
<div class="a" style="left:286px;top:683px;width:112px;height:46px;background:#e4e4e4;border-left:2px solid #6e6e6e;border-top:2px solid #6e6e6e"></div>
<div class="a" style="left:398px;top:683px;width:15px;height:46px;background:#f2f2f2;border-top:1px solid #fff;border-right:2px solid #6e6e6e"></div>
<svg style="left:402px;top:702px" width="5" height="8" viewBox="0 0 5 8"><path d="M0 0 L0 8 L5 4 Z" fill="#6a6a6a"/></svg><div class="a" style="left:122px;top:729px;width:291px;height:2px;background:#6e6e6e"></div>
<div class="btn" style="left:437px;top:682px;width:148px;height:48px"><span style="font-size:15.6px">Werte speichern</span></div>
<div class="t" style="left:138px;top:761px;font-size:16px;color:#000">X1:</div>
<div class="t" style="left:287px;top:761px;font-size:16px;color:#000">X2:</div>
<div class="btn" style="left:137px;top:782px;width:99px;height:49px"><span style="font-size:11px">Interval Grenze 1</span></div>
<div class="btn" style="left:287px;top:782px;width:99px;height:49px"><span style="font-size:11px">Interval Grenze 2</span></div>
<div class="btn" style="left:437px;top:782px;width:122px;height:49px"><span style="font-size:11px">Mittelwert berechnen</span></div>
<div class="t" style="left:437px;top:837px;font-size:16px;color:#000;letter-spacing:-.3px">Mittelwert:</div>
<div class="btn" style="left:51px;top:859px;width:149px;height:49px"><span style="font-size:11px">Auto Linescan</span></div>

</body></html>
